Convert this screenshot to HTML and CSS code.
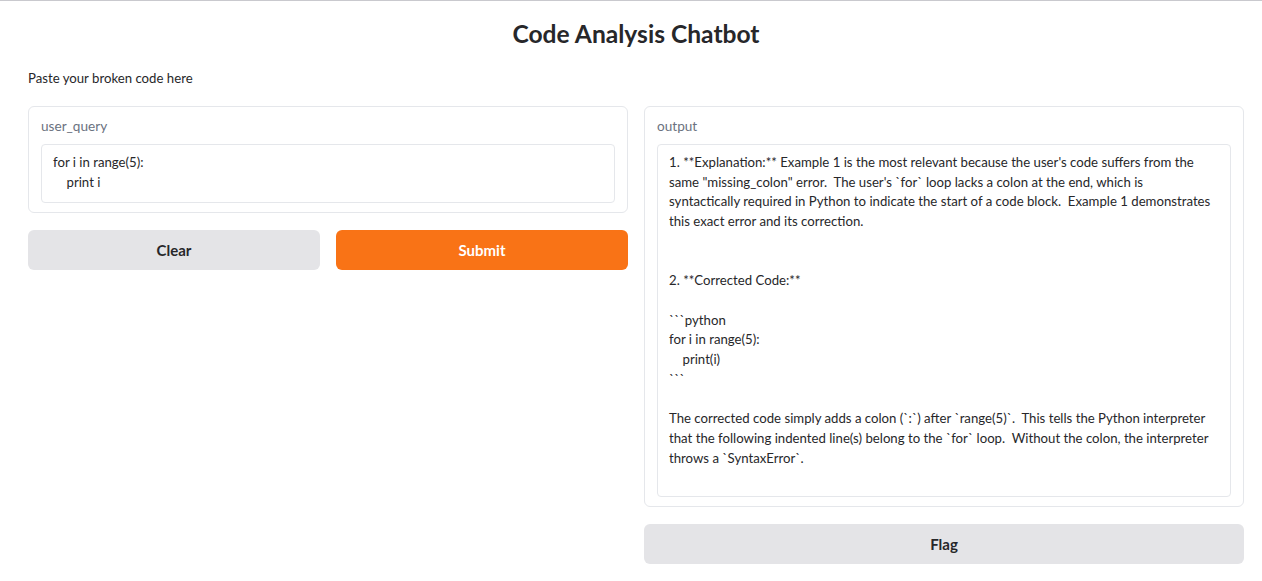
FILE: index.html
```html
<!DOCTYPE html>
<html>
<head>
<meta charset="utf-8">
<title>Code Analysis Chatbot</title>
<link rel="stylesheet" href="styles.css">
</head>
<body class="page">
<div class="app">
  <h1 class="title">Code Analysis Chatbot</h1>
  <p class="desc">Paste your broken code here</p>
  <div class="columns">
    <div class="col">
      <div class="panel">
        <div class="label">user_query</div>
        <div class="box">for i in range(5):
    print i</div>
      </div>
      <div class="btn-row">
        <button class="btn secondary">Clear</button>
        <button class="btn primary">Submit</button>
      </div>
    </div>
    <div class="col">
      <div class="panel">
        <div class="label">output</div>
        <div class="box output">1. **Explanation:** Example 1 is the most relevant because the user's code suffers from the
same "missing_colon" error.  The user's &#96;for&#96; loop lacks a colon at the end, which is
syntactically required in Python to indicate the start of a code block.  Example 1 demonstrates
this exact error and its correction.


2. **Corrected Code:**

&#96;&#96;&#96;python
for i in range(5):
    print(i)
&#96;&#96;&#96;

The corrected code simply adds a colon (&#96;:&#96;) after &#96;range(5)&#96;.  This tells the Python interpreter
that the following indented line(s) belong to the &#96;for&#96; loop.  Without the colon, the interpreter
throws a &#96;SyntaxError&#96;.</div>
      </div>
      <div class="btn-row">
        <button class="btn secondary">Flag</button>
      </div>
    </div>
  </div>
</div>
</body>
</html>
```

FILE: styles.css
```css
html {
  margin: 0;
  padding: 0;
  background: #ffffff;
}
.page {
  margin: 0;
  padding: 0;
  font-family: Lato, "Open Sans", sans-serif;
  color: #27272a;
  border-top: 1px solid #c9c9ce;
  background: #ffffff;
}
.app {
  padding: 0 18px 0 28px;
}
.title {
  margin: 17px 0 0;
  font-size: 24.6px;
  line-height: 32px;
  font-weight: 700;
  text-align: center;
  color: #27272a;
}
.desc {
  margin: 18px 0 0;
  font-size: 13.2px;
  line-height: 20px;
}
.columns {
  display: flex;
  gap: 16px;
  margin-top: 18px;
  align-items: flex-start;
}
.col {
  flex: 1 1 0;
  display: flex;
  flex-direction: column;
  gap: 17px;
}
.panel {
  border: 1px solid #e5e7eb;
  border-radius: 6px;
  padding: 9px 12px 9px 12px;
  display: flex;
  flex-direction: column;
  gap: 8px;
}
.label {
  font-size: 13.6px;
  line-height: 20px;
  color: #6b7280;
}
.box {
  border: 1px solid #e5e7eb;
  border-radius: 4px;
  padding: 8px 11px 10px;
  font-size: 13.2px;
  line-height: 19.7px;
  white-space: pre;
  color: #27272a;
}
.box.output {
  box-sizing: border-box;
  height: 353px;
}
.btn-row {
  display: flex;
  gap: 16px;
}
.btn {
  flex: 1 1 0;
  height: 40px;
  border: none;
  border-radius: 6px;
  font-family: Lato, "Open Sans", sans-serif;
  font-size: 15px;
  font-weight: 700;
}
.btn.secondary {
  background: #e4e4e7;
  color: #27272a;
}
.btn.primary {
  background: #f97316;
  color: #ffffff;
}
```
